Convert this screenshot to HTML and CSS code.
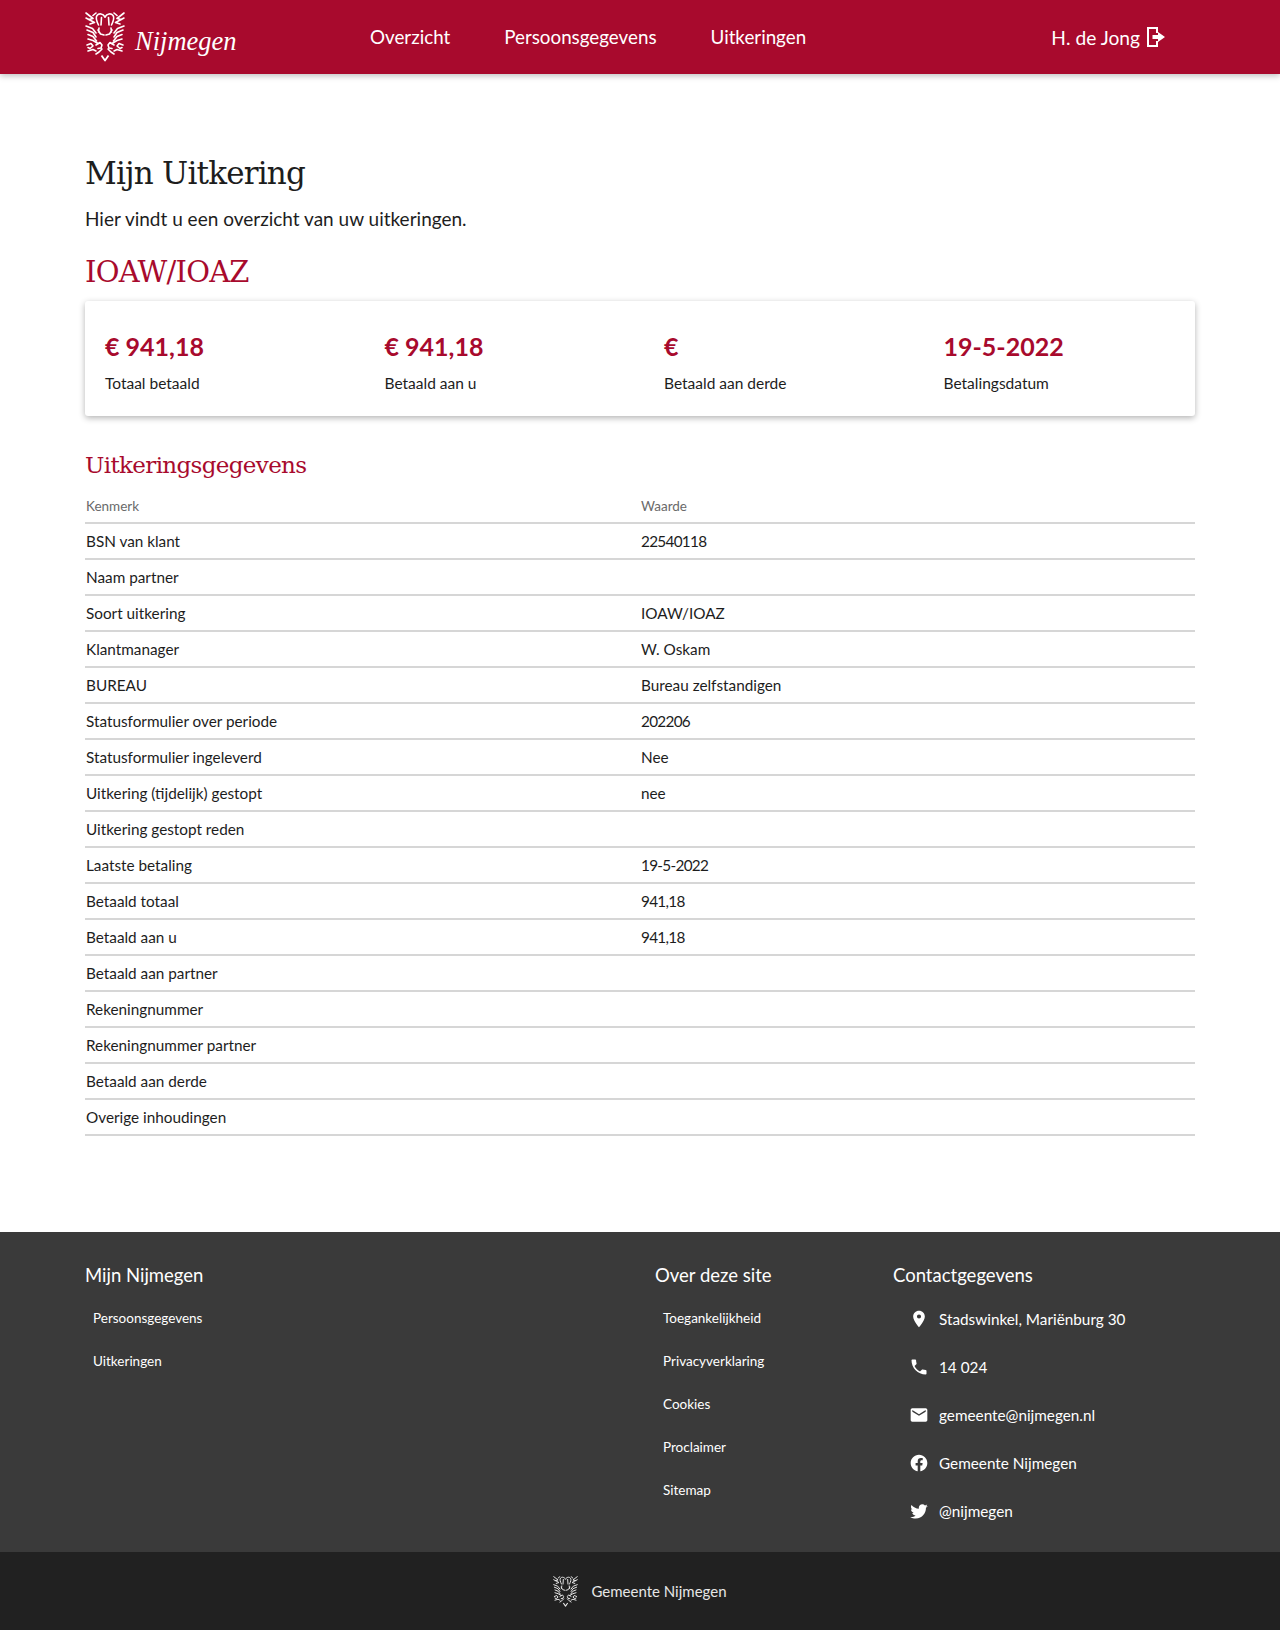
FILE: index.html
```html
<!DOCTYPE html>
<html lang="nl">
<head>
<meta charset="utf-8">
<title>Mijn Uitkering</title>
<link rel="stylesheet" href="styles.css">
</head>
<body>
<svg class="defs" width="0" height="0" aria-hidden="true">
  <defs>
    <g id="half" fill="none" stroke="currentColor" stroke-width="1.600" stroke-linecap="round" stroke-linejoin="round">
      <path d="M20 5 C18 1.500 14 1 12 3.500 C10.500 5.500 11.500 9 13.500 13"/>
      <path d="M16.500 5.500 L16 13"/>
      <path d="M1 1 L8 6.500 L3.500 7.500 M1 6 L9.500 10.500 L5 12 M8 3.500 L11 1"/>
      <path d="M1 14 L7.500 16.500 L11 21 M2 18 L8 20.500 L11 25 M3 22.500 L8 24.500 L11.500 29"/>
      <path d="M14 16 L13.500 20 M13 18 L15.500 22 L19 23"/>
      <path d="M3 27 L8 28.500 L13 31.500"/>
      <path d="M2 33 L6 31.500 L8 34 L5 36.500 L3 35.500 M3 39 L8 37.500 L11 39"/>
      <path d="M11 33 L15 30.500 L17 33 L16 36 L13 36.500 M17 37 L14 40 L11 42"/>
    </g>
    <symbol id="lion" viewBox="0 0 40 50">
      <use href="#half"/>
      <use href="#half" transform="matrix(-1 0 0 1 40 0)"/>
      <path fill="none" stroke="currentColor" stroke-width="1.800" stroke-linejoin="round" d="M16.500 43.500 L20 48.500 L23.500 43.500"/>
    </symbol>
  </defs>
</svg>

<header class="topbar">
  <div class="topbar-inner">
    <a class="brand" href="#">
      <svg class="brand-lion" width="40" height="50"><use href="#lion"/></svg>
      <span class="brand-name">Nijmegen</span>
    </a>
    <nav class="mainnav">
      <a href="#">Overzicht</a>
      <a href="#">Persoonsgegevens</a>
      <a href="#">Uitkeringen</a>
    </nav>
    <a class="user" href="#">
      <span>H. de Jong</span>
      <svg width="18" height="20" viewBox="0 0 18 20"><path fill="none" stroke="currentColor" stroke-width="2" d="M10 6 V1 H1 V19 H10 V14"/><path fill="currentColor" d="M5.500 8 H11 V5 L18 10 L11 15 V12 H5.500 Z"/></svg>
    </a>
  </div>
</header>

<main class="content">
  <h1 class="page-title">Mijn Uitkering</h1>
  <p class="intro">Hier vindt u een overzicht van uw uitkeringen.</p>
  <h2 class="benefit-title">IOAW/IOAZ</h2>
  <section class="card">
    <div class="stat"><div class="stat-value">€ 941,18</div><div class="stat-label">Totaal betaald</div></div>
    <div class="stat"><div class="stat-value">€ 941,18</div><div class="stat-label">Betaald aan u</div></div>
    <div class="stat"><div class="stat-value">€</div><div class="stat-label">Betaald aan derde</div></div>
    <div class="stat"><div class="stat-value">19-5-2022</div><div class="stat-label">Betalingsdatum</div></div>
  </section>
  <h3 class="section-title">Uitkeringsgegevens</h3>
  <table class="data">
    <thead><tr><th>Kenmerk</th><th>Waarde</th></tr></thead>
    <tbody>
      <tr><td>BSN van klant</td><td class="num">22540118</td></tr>
      <tr><td>Naam partner</td><td></td></tr>
      <tr><td>Soort uitkering</td><td>IOAW/IOAZ</td></tr>
      <tr><td>Klantmanager</td><td>W. Oskam</td></tr>
      <tr><td>BUREAU</td><td>Bureau zelfstandigen</td></tr>
      <tr><td>Statusformulier over periode</td><td class="num">202206</td></tr>
      <tr><td>Statusformulier ingeleverd</td><td>Nee</td></tr>
      <tr><td>Uitkering (tijdelijk) gestopt</td><td>nee</td></tr>
      <tr><td>Uitkering gestopt reden</td><td></td></tr>
      <tr><td>Laatste betaling</td><td class="num">19-5-2022</td></tr>
      <tr><td>Betaald totaal</td><td class="num">941,18</td></tr>
      <tr><td>Betaald aan u</td><td class="num">941,18</td></tr>
      <tr><td>Betaald aan partner</td><td></td></tr>
      <tr><td>Rekeningnummer</td><td></td></tr>
      <tr><td>Rekeningnummer partner</td><td></td></tr>
      <tr><td>Betaald aan derde</td><td></td></tr>
      <tr><td>Overige inhoudingen</td><td></td></tr>
    </tbody>
  </table>
</main>

<footer class="footer">
  <div class="footer-main">
    <div class="fcol fcol-a">
      <h4>Mijn Nijmegen</h4>
      <ul class="flinks"><li><a href="#">Persoonsgegevens</a></li><li><a href="#">Uitkeringen</a></li></ul>
    </div>
    <div class="fcol fcol-b">
      <h4>Over deze site</h4>
      <ul class="flinks">
        <li><a href="#">Toegankelijkheid</a></li><li><a href="#">Privacyverklaring</a></li><li><a href="#">Cookies</a></li><li><a href="#">Proclaimer</a></li><li><a href="#">Sitemap</a></li>
      </ul>
    </div>
    <div class="fcol fcol-c">
      <h4>Contactgegevens</h4>
      <ul class="fcontact">
        <li><svg viewBox="0 0 24 24"><path fill="currentColor" d="M12 2C8.130 2 5 5.130 5 9c0 5.250 7 13 7 13s7-7.750 7-13c0-3.870-3.130-7-7-7zm0 9.500a2.500 2.500 0 1 1 0-5 2.500 2.500 0 0 1 0 5z"/></svg><span>Stadswinkel, Mariënburg 30</span></li>
        <li><svg viewBox="0 0 24 24"><path fill="currentColor" d="M6.620 10.790c1.440 2.830 3.760 5.140 6.590 6.590l2.200-2.200c.27-.27.67-.36 1.020-.24 1.120.37 2.330.57 3.570.57.550 0 1 .45 1 1V20c0 .55-.45 1-1 1-9.390 0-17-7.610-17-17 0-.55.45-1 1-1h3.500c.55 0 1 .45 1 1 0 1.250.2 2.450.57 3.570.11.350.03.740-.25 1.020l-2.200 2.200z"/></svg><span>14 024</span></li>
        <li><svg viewBox="0 0 24 24"><path fill="currentColor" d="M20 4H4c-1.100 0-2 .9-2 2v12c0 1.100.9 2 2 2h16c1.100 0 2-.9 2-2V6c0-1.100-.9-2-2-2zm0 4l-8 5-8-5V6l8 5 8-5v2z"/></svg><span>gemeente@nijmegen.nl</span></li>
        <li><svg viewBox="0 0 24 24"><path fill="currentColor" d="M22 12.060C22 6.500 17.520 2 12 2S2 6.500 2 12.060c0 5.020 3.660 9.180 8.440 9.940v-7.030H7.900v-2.910h2.540V9.850c0-2.520 1.490-3.910 3.780-3.910 1.090 0 2.240.2 2.240.2v2.470h-1.260c-1.240 0-1.630.78-1.630 1.570v1.880h2.780l-.44 2.910h-2.340V22c4.780-.76 8.430-4.920 8.430-9.940z"/></svg><span>Gemeente Nijmegen</span></li>
        <li><svg viewBox="0 0 24 24"><path fill="currentColor" d="M22.460 6c-.77.350-1.600.580-2.460.690.880-.530 1.560-1.370 1.880-2.380-.830.500-1.750.850-2.720 1.050C18.370 4.500 17.260 4 16 4c-2.350 0-4.270 1.920-4.270 4.290 0 .340.040.670.110.980C8.280 9.090 5.110 7.380 3 4.790c-.370.630-.580 1.370-.580 2.150 0 1.490.750 2.810 1.910 3.560-.710 0-1.370-.200-1.950-.500v.030c0 2.080 1.480 3.820 3.440 4.210-.360.100-.740.150-1.130.150-.270 0-.540-.030-.800-.080.550 1.690 2.130 2.950 4.030 2.980-1.470 1.170-3.340 1.860-5.390 1.860-.340 0-.680-.020-1.020-.060C3.440 20.290 5.700 21 8.120 21 16 21 20.330 14.460 20.330 8.790c0-.190 0-.370-.010-.560.840-.600 1.560-1.360 2.140-2.230z"/></svg><span>@nijmegen</span></li>
      </ul>
    </div>
  </div>
  <div class="footer-bottom">
    <svg width="25" height="31"><use href="#lion"/></svg>
    <span>Gemeente Nijmegen</span>
  </div>
</footer>
</body>
</html>
```
FILE: styles.css
```css
* { box-sizing: border-box; }
html, body { margin: 0; padding: 0; }
body {
  font-family: "Lato", "Open Sans", sans-serif;
  font-size: 16px;
  color: #1d1d1d;
  background: #fff;
}
a { color: inherit; text-decoration: none; }
.defs { position: absolute; }

.topbar {
  height: 74px;
  background: #a80a2d;
  color: #fff;
  box-shadow: 0 2px 6px rgba(0, 0, 0, .25);
}
.topbar-inner {
  width: 1110px;
  margin: 0 auto;
  height: 100%;
  display: flex;
  align-items: center;
}
.brand { display: flex; align-items: flex-start; width: 285px; height: 74px; padding-top: 12px; }
.brand-lion { display: block; }
.brand-name {
  font-family: "Liberation Serif", serif;
  font-style: italic;
  font-size: 26.500px;
  margin: 11px 0 0 10px;
  line-height: 36px;
}
.mainnav { display: flex; gap: 54px; font-size: 18.800px; margin-bottom: 2px; }
.user { display: flex; align-items: center; gap: 7px; margin-left: auto; margin-right: 30px; font-size: 19.200px; }

.content { width: 1110px; margin: 0 auto; padding-top: 79px; }
.page-title {
  font-family: "DejaVu Serif", serif;
  font-weight: 400;
  font-size: 31px;
  letter-spacing: -0.800px;
  line-height: 40px;
  margin: 0;
}
.intro { font-size: 19px; line-height: 28px; margin: 12px 0 0; }
.benefit-title {
  font-family: "DejaVu Serif", serif;
  font-weight: 400;
  font-size: 29px;
  letter-spacing: -0.800px;
  line-height: 36px;
  color: #a80a2d;
  margin: 21px 0 0;
}
.card {
  margin-top: 11px;
  height: 115px;
  padding: 29px 20px 0;
  display: grid;
  grid-template-columns: repeat(4, 1fr);
  column-gap: 48px;
  border-radius: 3px;
  background: #fff;
  box-shadow: 0 2px 6px rgba(0, 0, 0, .3);
}
.stat-value { font-size: 25px; font-weight: 700; line-height: 32px; color: #a80a2d; }
.stat-label { font-size: 15.500px; line-height: 22px; margin-top: 10px; }
.section-title {
  font-family: "DejaVu Serif", serif;
  font-weight: 400;
  font-size: 23px;
  letter-spacing: -0.650px;
  line-height: 30px;
  color: #a80a2d;
  margin: 34px 0 0;
}
.data { width: 100%; border-collapse: collapse; margin-top: 7px; table-layout: fixed; }
.data th {
  text-align: left;
  font-weight: 400;
  font-size: 13.500px;
  color: #6a6a6a;
  height: 36px;
  padding: 2px 1px 0;
  border-bottom: 2px solid #d6d6d6;
}
.data td {
  height: 36px;
  padding: 0 1px;
  font-size: 15.300px;
  border-bottom: 2px solid #d6d6d6;
}
.data .num { letter-spacing: -0.700px; }
.data th:first-child, .data td:first-child { width: 555px; }

.footer { margin-top: 96px; color: #fff; }
.footer-main {
  height: 320px;
  background: #3a3a3a;
  padding: 30px 85px 0;
  display: grid;
  grid-template-columns: 570px 238px 1fr;
}
.fcol h4 { font-size: 18.500px; font-weight: 400; line-height: 26px; margin: 0; }
.flinks { list-style: none; margin: 9px 0 0; padding: 0 0 0 8px; font-size: 13.500px; }
.flinks li { height: 43px; line-height: 43px; }
.fcontact { list-style: none; margin: 7px 0 0; padding: 0 0 0 16px; font-size: 15.300px; }
.fcontact li { height: 48px; display: flex; align-items: center; gap: 10px; }
.fcontact svg { width: 20px; height: 20px; flex: none; }
.footer-bottom {
  height: 78px;
  background: #212121;
  display: flex;
  justify-content: center;
  align-items: center;
  gap: 13px;
  font-size: 15px;
  color: #e6e6e6;
}
```
